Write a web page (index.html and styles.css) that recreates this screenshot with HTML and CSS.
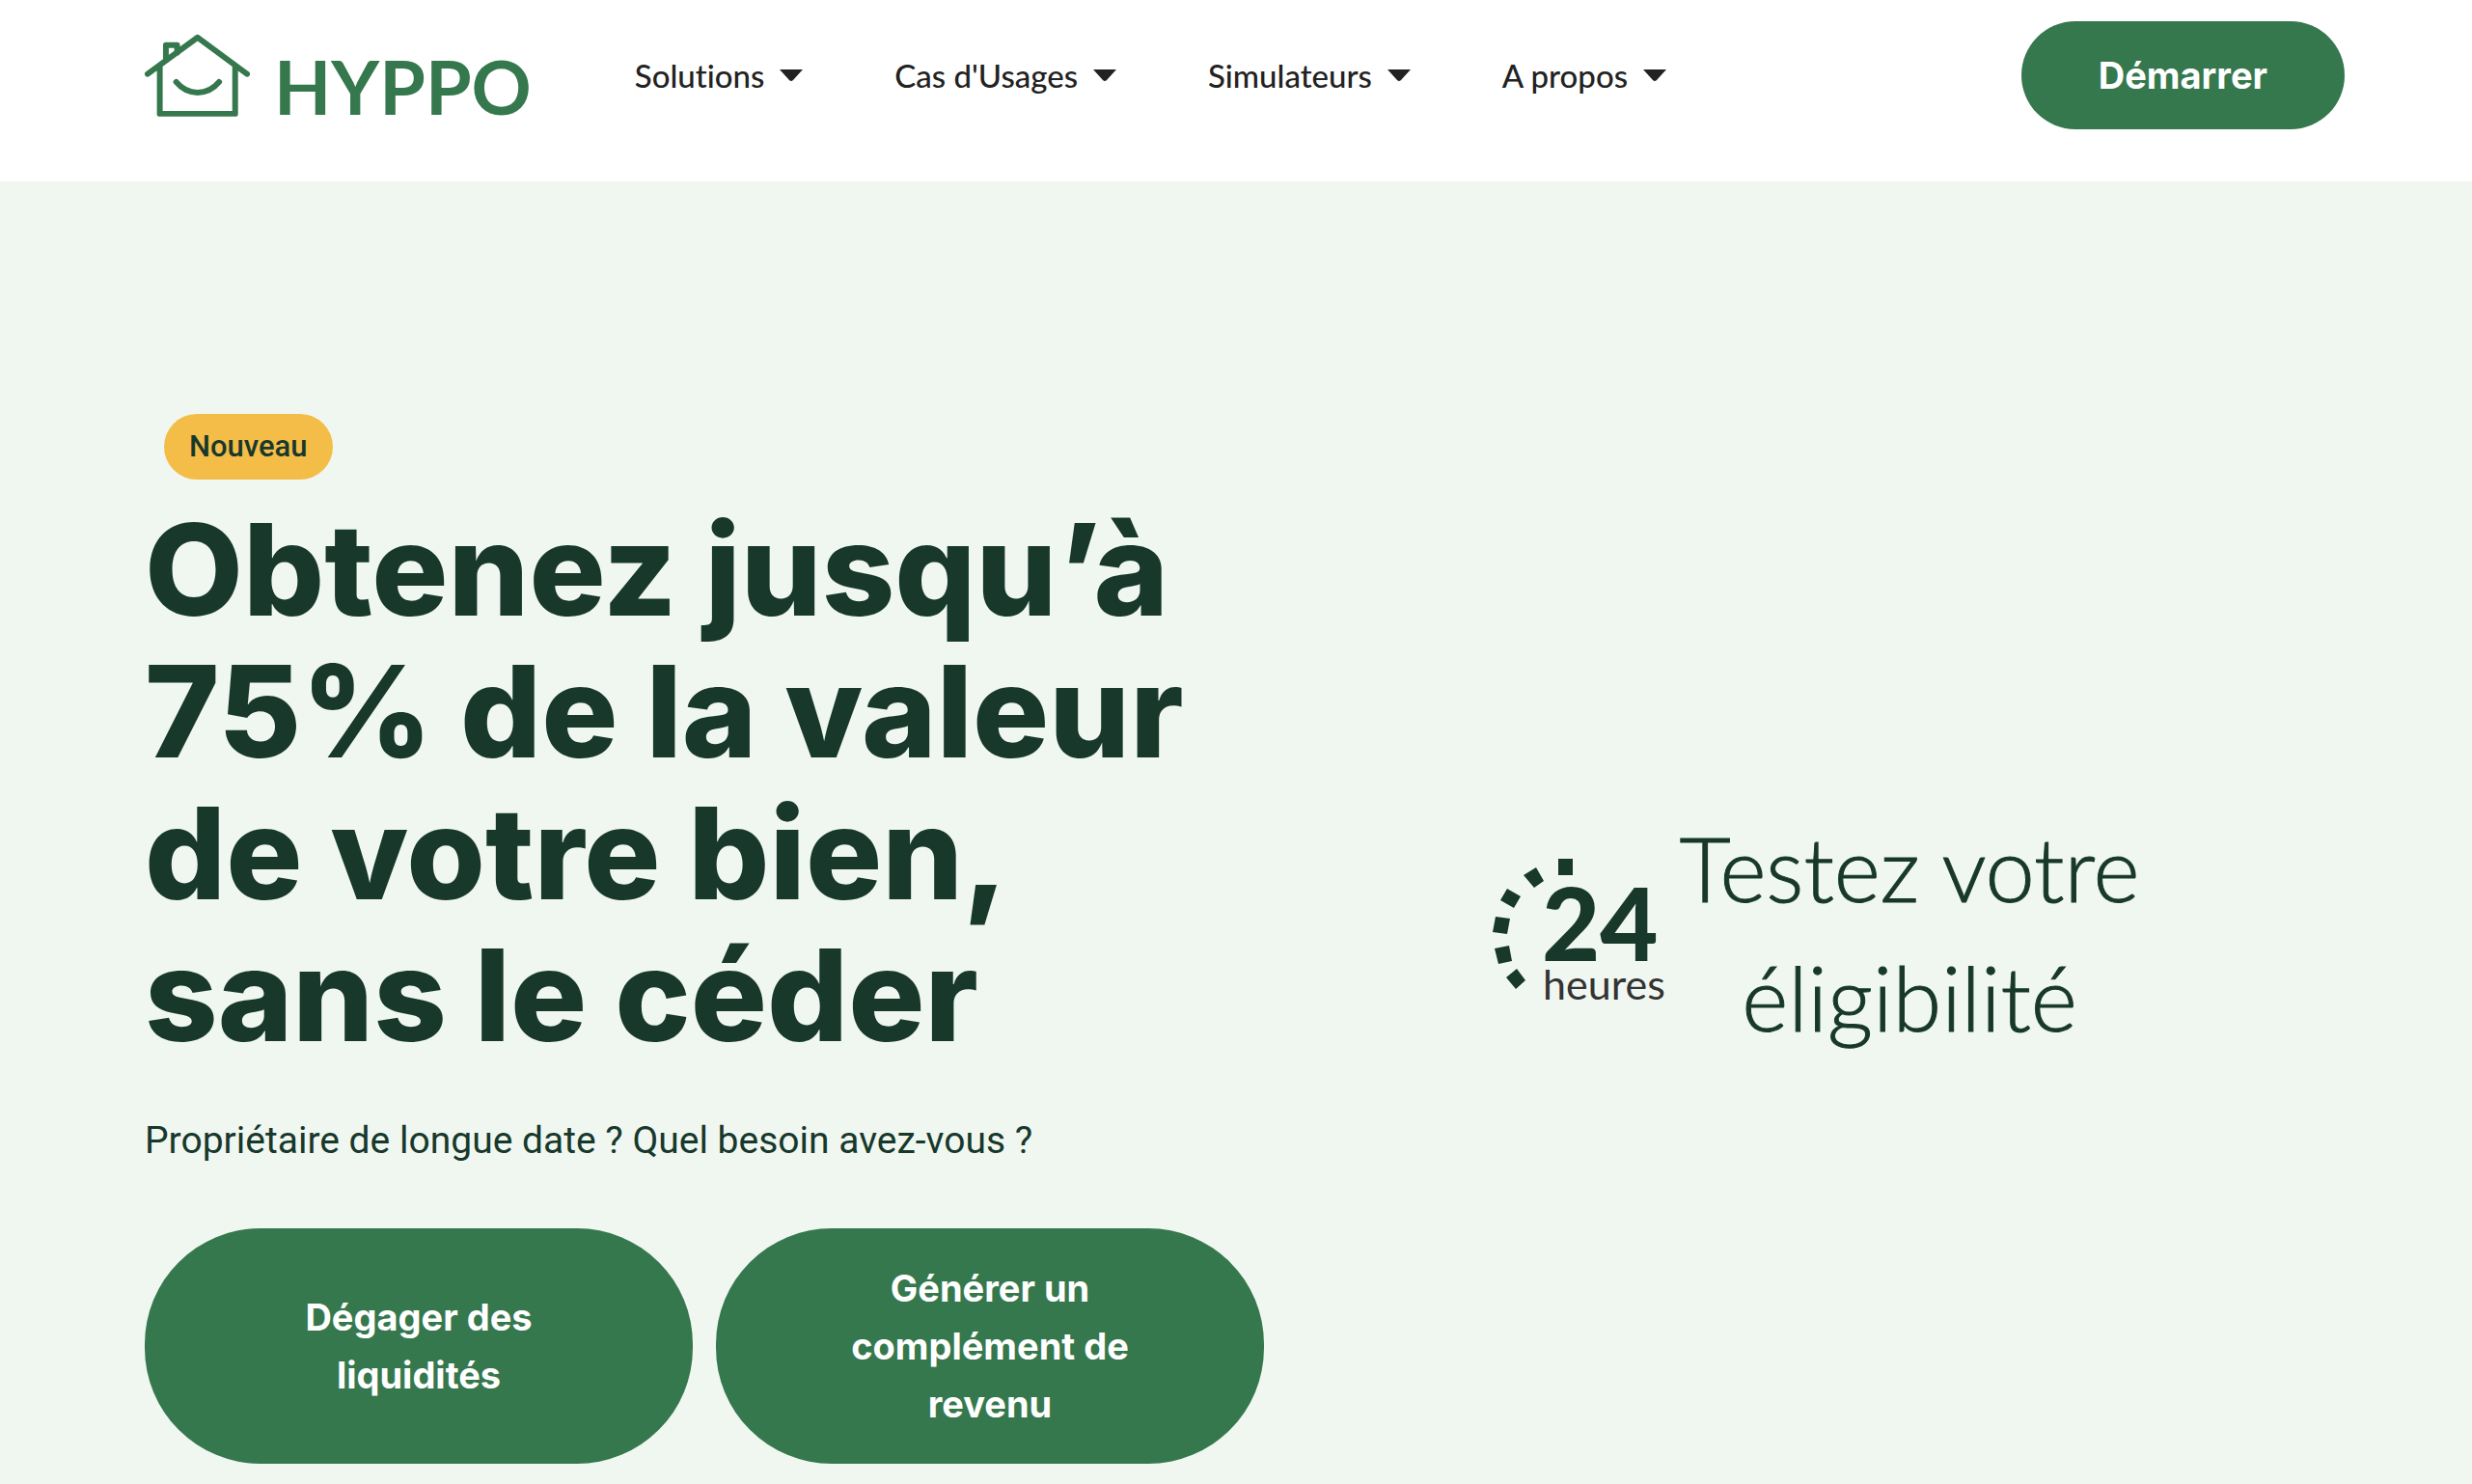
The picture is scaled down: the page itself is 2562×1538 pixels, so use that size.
FILE: index.html
```html
<!DOCTYPE html>
<html lang="fr">
<head>
  <meta charset="utf-8">
  <meta name="viewport" content="width=device-width, initial-scale=1">
  <title>Hyppo</title>
  <link rel="stylesheet" href="styles.css">
</head>
<body>
  <header class="header">
    <a class="logo" href="#">
      <svg class="logo-mark" viewBox="58 42 328 260" aria-hidden="true">
        <path d="M67 168 223 54 377 168M105 145V292H340V145M124 125V78H159V102M156 193C192 237 254 237 290 193"/>
      </svg>
      <span class="logo-name">HYPPO</span>
    </a>
    <nav class="nav">
      <button class="nav-item" type="button">Solutions <svg class="caret" viewBox="0 0 24 12" aria-hidden="true"><path d="M0 0H24L14 11Q12 13 10 11Z"/></svg></button>
      <button class="nav-item" type="button">Cas d'Usages <svg class="caret" viewBox="0 0 24 12" aria-hidden="true"><path d="M0 0H24L14 11Q12 13 10 11Z"/></svg></button>
      <button class="nav-item" type="button">Simulateurs <svg class="caret" viewBox="0 0 24 12" aria-hidden="true"><path d="M0 0H24L14 11Q12 13 10 11Z"/></svg></button>
      <button class="nav-item" type="button">A propos <svg class="caret" viewBox="0 0 24 12" aria-hidden="true"><path d="M0 0H24L14 11Q12 13 10 11Z"/></svg></button>
    </nav>
    <a class="button" href="#">Démarrer</a>
  </header>
  <main class="hero">
    <section class="intro">
      <span class="badge">Nouveau</span>
      <h1 class="title">Obtenez jusqu’à<br>75% de la valeur<br>de votre bien,<br>sans le céder</h1>
      <p class="lead">Propriétaire de longue date ? Quel besoin avez-vous ?</p>
      <div class="choices">
        <a class="button button-large" href="#">Dégager des liquidités</a>
        <a class="button button-large" href="#">Générer un complément de revenu</a>
      </div>
    </section>
    <a class="eligibility" href="#">
      <svg class="clock" viewBox="1548 886 184 162" role="img" aria-label="24 heures">
        <path d="M1616 890h15v17h-15zM1593 899l8 14-10 7-11-13zM1563 921l14 8-7 12-14-8zM1551 950l15 2-3 16-15-2zM1550 983l15-3 3 16-14 3zM1573 1004l9 12-10 9-10-12z"/>
        <text class="clock-number" x="1599" y="996">24</text>
        <text class="clock-unit" x="1600" y="1036">heures</text>
      </svg>
      <span class="eligibility-text">Testez votre<br>éligibilité</span>
    </a>
  </main>
</body>
</html>
```

FILE: styles.css
```css
:root {
  --green: #36784d;
  --ink: #17382b;
  --mint: #f0f7f1;
  --amber: #f4bd47;
}

* {
  box-sizing: border-box;
}

body {
  margin: 0;
  min-height: 100vh;
  display: flex;
  flex-direction: column;
  background: var(--mint);
  color: var(--ink);
  font-family: Roboto, sans-serif;
}

a {
  color: inherit;
  text-decoration: none;
}

.header {
  display: flex;
  align-items: center;
  padding: 22px 132px 54px 150px;
  background: #fff;
}

.logo {
  display: flex;
  align-items: flex-end;
  gap: 25px;
  color: var(--green);
}

.logo-mark {
  width: 109px;
  height: 88px;
  fill: none;
  stroke: currentColor;
  stroke-width: 18;
  stroke-linecap: round;
  stroke-linejoin: round;
}

.logo-name {
  font: 700 77px/66px Lato, sans-serif;
}

.nav {
  display: flex;
  gap: 95px;
  margin-left: 107px;
}

.nav-item {
  display: flex;
  align-items: center;
  gap: 16px;
  padding: 0;
  border: 0;
  background: none;
  color: #222;
  font: 500 33px/48px Lato, sans-serif;
  font-variant-ligatures: none;
  cursor: pointer;
}

.caret {
  width: 24px;
  height: 12px;
  fill: currentColor;
}

.button {
  display: flex;
  align-items: center;
  justify-content: center;
  padding: 26px 80px;
  border-radius: 120px;
  background: var(--green);
  color: #fff;
  font: 700 38px/60px Inter, sans-serif;
  text-align: center;
}

.header .button {
  margin-left: auto;
}

.hero {
  flex: 1;
  display: grid;
  grid-template-columns: 1160fr 1096fr;
  column-gap: 24px;
  align-items: center;
  align-content: start;
  padding: 241px 132px 21px 150px;
}

.badge {
  display: inline-block;
  margin-left: 20px;
  padding: 10px 26px;
  border-radius: 34px;
  background: var(--amber);
  font: 500 31px/48px Roboto, sans-serif;
}

.title {
  margin: 20px 0 0;
  font: 800 132px/147px Inter, sans-serif;
}

.lead {
  margin: 47px 0 61px;
  font-size: 39px;
  line-height: 60px;
}

.choices {
  display: grid;
  grid-template-columns: 1fr 1fr;
  gap: 24px;
}

.button-large {
  min-height: 244px;
  padding: 32px 120px;
}

.eligibility {
  display: flex;
  align-items: center;
  justify-content: center;
  gap: 10px;
  padding-bottom: 12px;
}

.clock {
  width: 184px;
  height: 162px;
  fill: currentColor;
}

.clock-number {
  font: 900 104px Lato, sans-serif;
}

.clock-unit {
  fill: #333;
  font: 400 43px Lato, sans-serif;
}

.eligibility-text {
  font: 300 92px/134px Lato, sans-serif;
  text-align: center;
  -webkit-text-stroke: 1px currentColor;
}
```
